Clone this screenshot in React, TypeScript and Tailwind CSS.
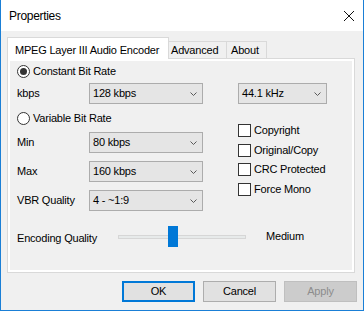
import React from 'react'

function Chevron() {
  return (
    <svg width="7" height="4" viewBox="0 0 7 4" className="shrink-0">
      <polyline points="0.5,0.5 3.5,3.5 6.5,0.5" fill="none" stroke="#5a5a5a" strokeWidth="1" />
    </svg>
  )
}

function Select({ value, className }: { value: string; className: string }) {
  return (
    <div className={`flex h-[21px] items-center justify-between border border-[#acacac] bg-[#e5e5e5] pl-[3px] pr-[5px] ${className}`}>
      <span>{value}</span>
      <Chevron />
    </div>
  )
}

function Radio({ checked, label }: { checked?: boolean; label: string }) {
  return (
    <div className="flex h-[20px] items-center gap-[3px] pl-[7px]">
      <span className="flex h-[13px] w-[13px] items-center justify-center rounded-full border border-[#333] bg-white">
        {checked && <span className="h-[7px] w-[7px] rounded-full bg-[#333]" />}
      </span>
      <span>{label}</span>
    </div>
  )
}

function Check({ label, className }: { label: string; className?: string }) {
  return (
    <div className={`flex h-[13px] items-center gap-[3px] ${className ?? ''}`}>
      <span className="h-[13px] w-[13px] border border-[#333] bg-white" />
      <span>{label}</span>
    </div>
  )
}

function Field({ label, value, className }: { label: string; value: string; className?: string }) {
  return (
    <div className={`flex items-center pl-[7px] ${className ?? ''}`}>
      <span className="w-[72px]">{label}</span>
      <Select value={value} className="w-[114px]" />
    </div>
  )
}

export default function App() {
  return (
    <div className="flex h-[311px] w-[364px] flex-col border-x border-b border-[#1a7fd6] bg-[#f0f0f0] font-['Liberation_Sans',Arial,sans-serif] text-[11px] tracking-[-0.2px] text-black">
      {/* title bar */}
      <div className="flex h-[31px] shrink-0 items-center justify-between bg-white pl-[8px] pr-[9px]">
        <span className="text-[12px] tracking-[-0.3px]">Properties</span>
        <svg width="10" height="10" viewBox="0 0 10 10">
          <path d="M0 0L10 10M10 0L0 10" stroke="#111" strokeWidth="1" />
        </svg>
      </div>

      <div className="flex flex-col pl-[6px] pt-[6px]">
        {/* tabs */}
        <div className="relative z-10 flex h-[21px] items-end">
          <div className="-mb-px flex h-[22px] w-[162px] items-start border border-b-0 border-[#d9d9d9] bg-white pl-[7px] pt-[4px]">
            MPEG Layer III Audio Encoder
          </div>
          <div className="flex h-[17px] w-[58px] items-center border border-b-0 border-l-0 border-[#d9d9d9] bg-[#f0f0f0] pl-[2px] pt-px">
            Advanced
          </div>
          <div className="flex h-[17px] w-[40px] items-center border border-b-0 border-l-0 border-[#d9d9d9] bg-[#f0f0f0] pl-[4px] pt-px">
            About
          </div>
        </div>

        {/* tab page */}
        <div className="h-[215px] w-[348px] border border-[#d9d9d9] bg-white p-[2px]">
          <div className="flex h-full flex-col bg-[#f0f0f0]">
            <div className="flex">
              <div className="flex w-[228px] flex-col">
                <Radio checked label="Constant Bit Rate" />
                <Field label="kbps" value="128 kbps" className="mt-[2px]" />
                <div className="mt-[4px]">
                  <Radio label="Variable Bit Rate" />
                </div>
                <Field label="Min" value="80 kbps" className="mt-[4px]" />
                <Field label="Max" value="160 kbps" className="mt-[8px]" />
                <Field label="VBR Quality" value="4 - ~1:9" className="mt-[8px]" />
              </div>
              <div className="flex flex-col pt-[22px]">
                <Select value="44.1 kHz" className="w-[89px]" />
                <Check label="Copyright" className="mt-[20px]" />
                <Check label="Original/Copy" className="mt-[7px]" />
                <Check label="CRC Protected" className="mt-[6px]" />
                <Check label="Force Mono" className="mt-[7px]" />
              </div>
            </div>

            <div className="mt-[15px] flex h-[21px] items-center pl-[7px]">
              <span className="w-[101px] pt-[3px]">Encoding Quality</span>
              <div className="relative flex h-[21px] w-[128px] items-center">
                <div className="mt-[1px] h-[4px] w-full border border-[#d6d6d6] bg-[#e7eaea]" />
                <div className="absolute left-[50px] top-0 h-[21px] w-[10px] bg-[#0078d7]" />
              </div>
              <span className="ml-[20px] pb-px">Medium</span>
            </div>
          </div>
        </div>
      </div>

      {/* buttons */}
      <div className="mt-[8px] flex justify-end gap-[8px] pr-[6px]">
        <button className="flex h-[21px] w-[73px] items-center justify-center border-2 border-[#0078d7] bg-[#e1e1e1]">
          OK
        </button>
        <button className="flex h-[21px] w-[73px] items-center justify-center border border-[#adadad] bg-[#e1e1e1]">
          Cancel
        </button>
        <button className="flex h-[21px] w-[73px] items-center justify-center border border-[#bfbfbf] bg-[#cccccc] text-[#8d8d8d]">
          Apply
        </button>
      </div>
    </div>
  )
}
